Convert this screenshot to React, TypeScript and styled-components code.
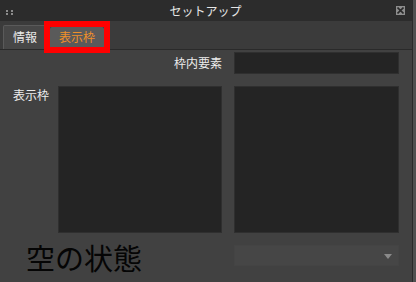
import React from 'react';
import styled, { createGlobalStyle } from 'styled-components';

const GlobalStyle = createGlobalStyle`
  html, body {
    margin: 0;
    padding: 0;
    background: #505050;
    font-family: "Noto Sans CJK JP", "Noto Sans", sans-serif;
  }
`;

const Window = styled.div`
  width: 412px;
  height: 282px;
  background: #414141;
  border-right: 1px solid #2a2a2a;
  display: flex;
  flex-direction: column;
  overflow: hidden;
`;

const TitleBar = styled.div`
  height: 21px;
  flex: none;
  background: #2c2c2c;
  display: flex;
  align-items: center;
  padding: 0 6px;
  box-sizing: border-box;
`;

const Grip = styled.div`
  width: 7px;
  height: 5px;
  display: grid;
  grid-template-columns: 2px 2px;
  grid-template-rows: 2px 2px;
  column-gap: 3px;
  row-gap: 1px;
  margin-top: 4px;

  span {
    background: #8c8c8c;
  }
`;

const Title = styled.div`
  flex: 1;
  text-align: center;
  color: #e6e6e6;
  font-size: 12px;
  line-height: 21px;
  padding-left: 2px;
`;

const CloseButton = styled.div`
  width: 9px;
  height: 9px;
  background: #8e8e8e;
  display: flex;
  align-items: center;
  justify-content: center;
  margin-right: 1px;
`;

const TabBar = styled.div`
  height: 28px;
  flex: none;
  background: #3b3b3b;
  border-bottom: 1px solid #2a2a2a;
  display: flex;
  align-items: flex-end;
  gap: 3px;
  padding-left: 3px;
`;

const Tab = styled.div<{ $active?: boolean }>`
  position: relative;
  height: ${p => (p.$active ? '20px' : '24px')};
  margin-bottom: ${p => (p.$active ? '2px' : '0')};
  padding: 0 9px;
  background: ${p => (p.$active ? '#5a5a5a' : '#474747')};
  border: ${p => (p.$active ? 'none' : '1px solid #5a5a5a')};
  border-bottom: none;
  border-radius: 2px 2px 0 0;
  color: ${p => (p.$active ? '#f0902a' : '#eaeaea')};
  font-size: 12px;
  line-height: ${p => (p.$active ? '20px' : '22px')};
  box-sizing: border-box;

  ${p =>
    p.$active &&
    `
    &::after {
      content: '';
      position: absolute;
      inset: -6px;
      border: 6px solid #ff0000;
    }
  `}
`;

const Content = styled.div`
  flex: 1;
  display: grid;
  grid-template-columns: 33px 164px 165px;
  grid-template-rows: 22px 147px 21px;
  column-gap: 12px;
  row-gap: 12px;
  padding: 2px 0 0 13px;
`;

const FieldLabel = styled.div<{ $span?: boolean }>`
  grid-column: ${p => (p.$span ? '1 / 3' : 'auto')};
  color: #ececec;
  font-size: 12px;
  line-height: 14px;
  white-space: nowrap;
  text-align: ${p => (p.$span ? 'right' : 'left')};
  align-self: ${p => (p.$span ? 'center' : 'start')};
  padding-top: ${p => (p.$span ? '0' : '2px')};
`;

const Field = styled.div`
  background: #242424;
  border: 1px solid #2f2f2f;
  box-sizing: border-box;
`;

const EmptyState = styled.div`
  grid-column: 1 / 3;
  color: #050505;
  font-size: 29px;
  line-height: 29px;
  padding-left: 13px;
  margin-top: -2px;
  white-space: nowrap;
`;

const Select = styled.div`
  background: #464646;
  border: 1px solid #444444;
  box-sizing: border-box;
  display: flex;
  align-items: center;
  justify-content: flex-end;
  padding-right: 6px;
`;

const Arrow = styled.div`
  width: 0;
  height: 0;
  border-left: 4px solid transparent;
  border-right: 4px solid transparent;
  border-top: 5px solid #8a8a8a;
  margin-top: 1px;
`;

const App: React.FC = () => {
  return (
    <>
      <GlobalStyle />
      <Window>
        <TitleBar>
          <Grip>
            <span />
            <span />
            <span />
            <span />
          </Grip>
          <Title>セットアップ</Title>
          <CloseButton>
            <svg width="7" height="7" viewBox="0 0 7 7">
              <path d="M0.5 0.5 L6.5 6.5 M6.5 0.5 L0.5 6.5" stroke="#2a2a2a" strokeWidth="1.6" />
            </svg>
          </CloseButton>
        </TitleBar>
        <TabBar>
          <Tab>情報</Tab>
          <Tab $active>表示枠</Tab>
        </TabBar>
        <Content>
          <FieldLabel $span>枠内要素</FieldLabel>
          <Field />
          <FieldLabel>表示枠</FieldLabel>
          <Field />
          <Field />
          <EmptyState>空の状態</EmptyState>
          <Select>
            <Arrow />
          </Select>
        </Content>
      </Window>
    </>
  );
};

export default App;
